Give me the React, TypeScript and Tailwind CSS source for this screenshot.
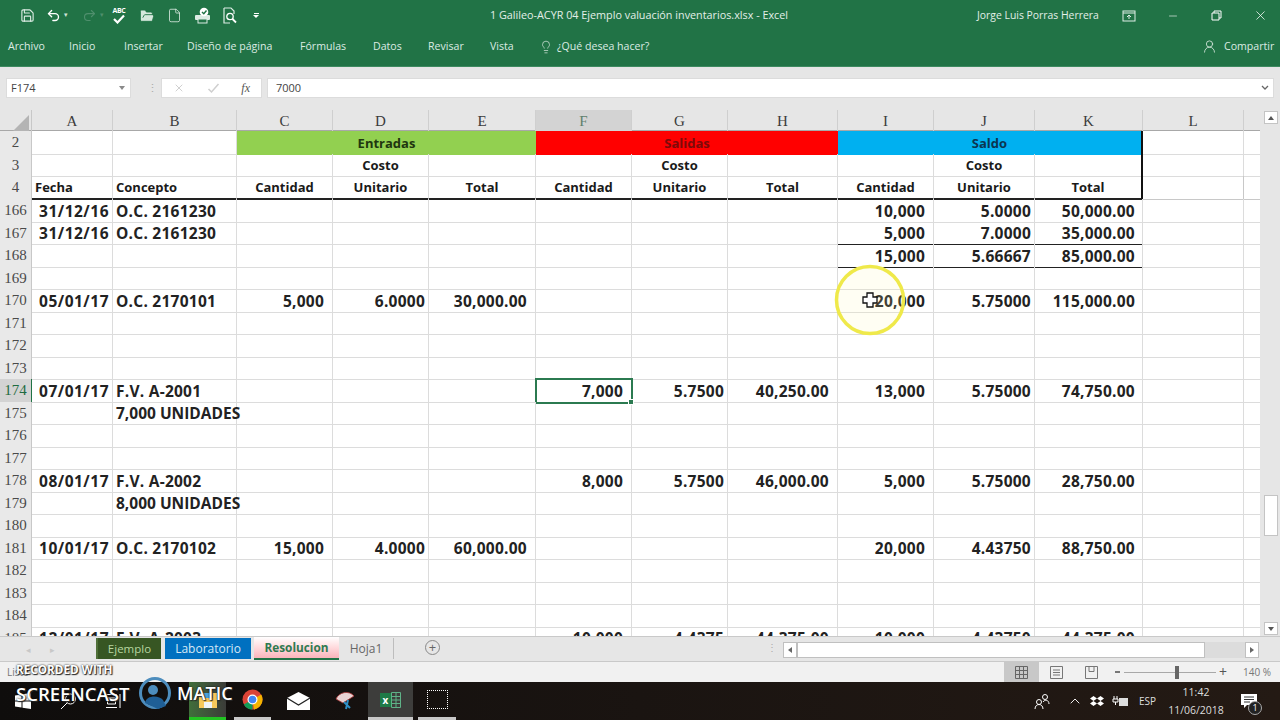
import { ChevronUp, File, FolderOpen, Lightbulb, Minus, Redo2, Save, Undo2, UserRound, X } from "lucide-react";

const colNames = ["A", "B", "C", "D", "E", "F", "G", "H", "I", "J", "K", "L"];
const gridCols = "grid grid-cols-[32px_81px_124px_96px_96px_107px_96px_96px_110px_96px_101px_108px_101px_16px]";

const numPad: Record<string, string> = {
  A: "pr-[3px] justify-end tracking-[0.5px]",
  B: "pl-[3px] justify-start",
  C: "pr-[8px] justify-end",
  D: "pr-[3px] justify-end",
  E: "pr-[8px] justify-end",
  F: "pr-[8px] justify-end",
  G: "pr-[3px] justify-end",
  H: "pr-[8px] justify-end",
  I: "pr-[8px] justify-end",
  J: "pr-[3px] justify-end",
  K: "pr-[7px] justify-end",
  L: "",
};

const rows: { n: number; cells?: Record<string, string>; line?: boolean }[] = [
  { n: 166, cells: { A: "31/12/16", B: "O.C. 2161230", I: "10,000", J: "5.0000", K: "50,000.00" } },
  { n: 167, cells: { A: "31/12/16", B: "O.C. 2161230", I: "5,000", J: "7.0000", K: "35,000.00" }, line: true },
  { n: 168, cells: { I: "15,000", J: "5.66667", K: "85,000.00" }, line: true },
  { n: 169 },
  { n: 170, cells: { A: "05/01/17", B: "O.C. 2170101", C: "5,000", D: "6.0000", E: "30,000.00", I: "20,000", J: "5.75000", K: "115,000.00" } },
  { n: 171 },
  { n: 172 },
  { n: 173 },
  { n: 174, cells: { A: "07/01/17", B: "F.V. A-2001", F: "7,000", G: "5.7500", H: "40,250.00", I: "13,000", J: "5.75000", K: "74,750.00" } },
  { n: 175, cells: { B: "7,000 UNIDADES" } },
  { n: 176 },
  { n: 177 },
  { n: 178, cells: { A: "08/01/17", B: "F.V. A-2002", F: "8,000", G: "5.7500", H: "46,000.00", I: "5,000", J: "5.75000", K: "28,750.00" } },
  { n: 179, cells: { B: "8,000 UNIDADES" } },
  { n: 180 },
  { n: 181, cells: { A: "10/01/17", B: "O.C. 2170102", C: "15,000", D: "4.0000", E: "60,000.00", I: "20,000", J: "4.43750", K: "88,750.00" } },
  { n: 182 },
  { n: 183 },
  { n: 184 },
  { n: 185, cells: { A: "12/01/17", B: "F.V. A-2003", F: "10,000", G: "4.4375", H: "44,375.00", I: "10,000", J: "4.43750", K: "44,375.00" } },
];

const headLabels: Record<string, string> = {
  A: "Fecha",
  B: "Concepto",
  C: "Cantidad",
  D: "Unitario",
  E: "Total",
  F: "Cantidad",
  G: "Unitario",
  H: "Total",
  I: "Cantidad",
  J: "Unitario",
  K: "Total",
};

function RowNum({ n, active }: { n: number; active?: boolean }) {
  return (
    <div
      className={`flex items-center justify-center border-r border-b font-['Liberation_Serif',serif] text-[15px] ${
        active
          ? "bg-[#d3d3d3] text-[#1f6b41] border-r-[#217346] border-b-[#c0c0c0]"
          : "bg-[#e9e9e9] text-[#4a4a4a] border-[#c8c8c8]"
      }`}
    >
      {n}
    </div>
  );
}

function SheetHeader() {
  return (
    <>
      <div className={`${gridCols} h-[21px] bg-[#e6e6e6] border-b border-[#a8a8a8] font-['Liberation_Serif',serif] text-[15px] text-[#3c3c3c]`}>
        <div className="relative border-r border-[#c8c8c8]">
          <div className="absolute right-[2px] bottom-[2px] w-0 h-0 border-l-[16px] border-l-transparent border-b-[16px] border-b-[#b4b4b4]" />
        </div>
        {colNames.map((c) => (
          <div
            key={c}
            className={`flex items-center justify-center border-r border-[#cfcfcf] ${c === "F" ? "bg-[#d3d3d3] text-[#5f7f6c]" : ""}`}
          >
            {c}
          </div>
        ))}
        <div />
      </div>
      <div className={`${gridCols} h-[22.5px]`}>
        <RowNum n={2} />
        <div className="border-r border-b border-[#dcdcdc]" />
        <div className="border-r border-b border-[#dcdcdc]" />
        <div className="col-span-3 flex items-center justify-center bg-[#92d050] pt-[1px] text-[13px] font-bold text-[#20360f]">Entradas</div>
        <div className="col-span-3 flex items-center justify-center bg-[#ff0000] pt-[1px] text-[13px] font-bold text-[#7c0a0a]">Salidas</div>
        <div className="col-span-3 flex items-center justify-center bg-[#00b0f0] pt-[1px] text-[13px] font-bold text-[#0b3550] border-r-2 border-r-[#111]">Saldo</div>
        <div className="border-r border-b border-[#dcdcdc]" />
        <div className="border-b border-[#dcdcdc]" />
      </div>
      <div className={`${gridCols} h-[22.5px]`}>
        <RowNum n={3} />
        {colNames.map((c) => (
          <div
            key={c}
            className={`flex items-center justify-center border-b border-b-[#dcdcdc] pt-[1px] text-[13px] font-bold text-[#1a1a1a] ${
              c === "K" ? "border-r-2 border-r-[#111]" : "border-r border-r-[#dcdcdc]"
            }`}
          >
            {c === "D" || c === "G" || c === "J" ? "Costo" : ""}
          </div>
        ))}
        <div className="border-b border-[#dcdcdc]" />
      </div>
      <div className={`${gridCols} h-[23px]`}>
        <RowNum n={4} />
        {colNames.map((c) => {
          if (c === "L") return <div key={c} className="border-r border-b border-[#c8c8c8]" />;
          return (
            <div
              key={c}
              className={`flex items-center whitespace-nowrap border-b-2 border-b-[#222] pt-[2px] text-[13px] font-bold text-[#1a1a1a] ${
                c === "A" || c === "B" ? "pl-[3px]" : "justify-center"
              } ${c === "K" ? "border-r-2 border-r-[#111]" : "border-r border-r-[#dcdcdc]"}`}
            >
              {headLabels[c]}
            </div>
          );
        })}
        <div className="border-b border-[#c8c8c8]" />
      </div>
    </>
  );
}

function DataRow({ n, cells, line }: { n: number; cells?: Record<string, string>; line?: boolean }) {
  const active = n === 174;
  return (
    <div className={`${gridCols} h-[22.5px]`}>
      <RowNum n={n} active={active} />
      {colNames.map((c) => {
        const selected = active && c === "F";
        const ruled = line && (c === "I" || c === "J" || c === "K");
        const caps = c === "B" && cells?.B?.includes("UNIDADES");
        return (
          <div
            key={c}
            className={`relative flex items-center whitespace-nowrap pt-[2px] text-[15.5px] leading-none font-bold text-[#222] ${numPad[c]} ${
              caps || c === "A" ? "" : "tracking-[0.25px]"
            } ${ruled ? "border-b border-b-[#222]" : "border-b border-b-[#dcdcdc]"} border-r border-r-[#dcdcdc] ${
              selected ? "outline-2 -outline-offset-1 outline-[#2b7a50]" : ""
            }`}
          >
            {c === "B" ? <span className="relative z-10">{cells?.[c]}</span> : cells?.[c]}
            {selected && (
              <div className="absolute -right-[3px] -bottom-[3px] z-10 h-[6px] w-[6px] border border-white bg-[#2b7a50]" />
            )}
          </div>
        );
      })}
      <div className="border-b border-[#dcdcdc]" />
    </div>
  );
}

function Spell() {
  return (
    <div className="flex w-[16px] flex-col items-center leading-none text-white">
      <span className="text-[7px] font-bold tracking-tighter">ABC</span>
      <svg width="14" height="10" viewBox="0 0 14 10">
        <path d="M2 5l3.500 3.500L12 1.500" fill="none" stroke="white" strokeWidth="2.2" />
      </svg>
    </div>
  );
}

function TitleBar() {
  return (
    <div className="flex h-[31px] items-center bg-[#217346] text-white">
      <div className="flex w-[40px] justify-end pr-[5px]">
        <Save size={15} strokeWidth={1.8} className="text-[#dcebe3]" />
      </div>
      <div className="flex w-[21px] justify-end">
        <Undo2 size={15} strokeWidth={2.2} />
      </div>
      <span className="ml-[3px] w-[18px] text-[7px] text-[#cfe2d7]">▾</span>
      <Redo2 size={15} strokeWidth={1.8} className="text-[#4f8f6d]" />
      <span className="ml-[3px] w-[11px] text-[7px] text-[#4f8f6d]">▾</span>
      <Spell />
      <FolderOpen size={16} fill="#d6e8dd" strokeWidth={1.4} className="ml-[12px] text-[#217346]" />
      <File size={15} strokeWidth={1.3} className="ml-[12px] text-[#dcebe3]" />
      <svg width="17" height="17" viewBox="0 0 17 17" className="ml-[12px]">
        <rect x="1" y="8" width="15" height="5" rx="1" fill="#dcebe3" />
        <rect x="4" y="12" width="9" height="4" fill="#217346" stroke="#dcebe3" />
        <circle cx="10" cy="5" r="4.300" fill="white" />
        <path d="M8 5l1.800 1.800L12.500 3.500" stroke="#217346" strokeWidth="1.4" fill="none" />
      </svg>
      <svg width="16" height="17" viewBox="0 0 16 17" className="ml-[11px]">
        <path d="M2 1h7l3 3v3M2 1v15h6" fill="none" stroke="#dcebe3" strokeWidth="1.2" />
        <circle cx="8" cy="9.500" r="3.200" fill="none" stroke="white" strokeWidth="1.3" />
        <path d="M10.500 12l3.500 3.500" stroke="white" strokeWidth="1.8" />
      </svg>
      <div className="ml-[15px] flex w-[6px] flex-col items-center gap-[1px]">
        <div className="h-px w-[5px] bg-white" />
        <div className="h-0 w-0 border-x-[3px] border-t-[3px] border-x-transparent border-t-white" />
      </div>
      <span className="ml-[231px] w-[300px] whitespace-nowrap text-[10.8px] text-[#e3efe8]">
        1 Galileo-ACYR 04 Ejemplo valuación inventarios.xlsx  -  Excel
      </span>
      <span className="ml-[187px] w-[122px] whitespace-nowrap text-[10.4px] text-[#e3efe8]">Jorge Luis Porras Herrera</span>
      <svg width="14" height="12" viewBox="0 0 14 12" className="ml-[23px]">
        <rect x="1" y="1" width="12" height="10" fill="none" stroke="#dfeee6" />
        <path d="M1 3h12M7 9V5M5 7l2-2 2 2" fill="none" stroke="#dfeee6" />
      </svg>
      <Minus size={12} strokeWidth={1.2} className="ml-[31px]" />
      <svg width="11" height="11" viewBox="0 0 11 11" className="ml-[32px]">
        <path d="M3 3V1h7v7H8M1 3h7v7H1z" fill="none" stroke="white" />
      </svg>
      <X size={15} strokeWidth={1.2} className="ml-[31px]" />
    </div>
  );
}

function RibbonTabs() {
  const tabs = [
    ["Archivo", "ml-[8px] w-[39px]"],
    ["Inicio", "ml-[22px] w-[28px]"],
    ["Insertar", "ml-[27px] w-[36px]"],
    ["Diseño de página", "ml-[27px] w-[86px]"],
    ["Fórmulas", "ml-[27px] w-[46px]"],
    ["Datos", "ml-[27px] w-[28px]"],
    ["Revisar", "ml-[27px] w-[35px]"],
    ["Vista", "ml-[27px] w-[24px]"],
  ];
  return (
    <div className="flex h-[36px] items-center border-b border-[#3d8a60] bg-[#217346] pb-[4px] text-[10.6px] text-[#dcebe3]">
      {tabs.map(([label, cls]) => (
        <span key={label} className={`${cls} whitespace-nowrap`}>
          {label}
        </span>
      ))}
      <Lightbulb size={14} strokeWidth={1.2} className="ml-[25px]" />
      <span className="ml-[4px] w-[90px] whitespace-nowrap">¿Qué desea hacer?</span>
      <UserRound size={15} strokeWidth={1.3} className="ml-[555px]" />
      <span className="ml-[7px] whitespace-nowrap">Compartir</span>
    </div>
  );
}

function FormulaBar() {
  return (
    <div className="flex h-[43px] items-start bg-[#e6e6e6] pt-[11px] pl-[6px] pr-[6px] text-[11px] text-[#444]">
      <div className="flex h-[20px] w-[125px] items-center justify-between border border-[#dcdcdc] bg-white pl-[4px] pr-[5px]">
        <span>F174</span>
        <span className="h-0 w-0 border-x-[3px] border-t-[4px] border-x-transparent border-t-[#8a8a8a]" />
      </div>
      <div className="ml-[13px] flex h-[20px] w-[17px] items-center justify-center text-[#aaa]">⋮</div>
      <div className="flex h-[20px] w-[101px] items-center justify-between border border-[#dcdcdc] bg-white px-[11px]">
        <X size={12} className="text-[#d0d0d0]" />
        <svg width="13" height="11" viewBox="0 0 13 11">
          <path d="M1.500 6l3 3 7-8" fill="none" stroke="#cfcfcf" strokeWidth="1.500" />
        </svg>
        <span className="font-['Liberation_Serif',serif] text-[12px] italic text-[#555]">fx</span>
      </div>
      <div className="ml-[5px] flex h-[20px] flex-1 items-center justify-between border border-[#dcdcdc] bg-white pl-[8px] pr-[4px]">
        <span>7000</span>
        <svg width="8" height="6" viewBox="0 0 8 6">
          <path d="M1 1l3 3 3-3" fill="none" stroke="#666" strokeWidth="1.300" />
        </svg>
      </div>
    </div>
  );
}

function VScroll() {
  return (
    <div className="flex w-[20px] flex-col items-center bg-[#e6e6e6] pt-[1px] pb-[1px] pl-[1px]">
      <div className="flex h-[13px] w-[14px] items-center justify-center border border-[#c4c4c4] bg-white">
        <div className="h-0 w-0 border-x-[3px] border-b-[4px] border-x-transparent border-b-[#555]" />
      </div>
      <div className="mt-[371px] h-[41px] w-[14px] border border-[#c4c4c4] bg-white" />
      <div className="flex-1" />
      <div className="flex h-[13px] w-[14px] items-center justify-center border border-[#c4c4c4] bg-white">
        <div className="h-0 w-0 border-x-[3px] border-t-[4px] border-x-transparent border-t-[#555]" />
      </div>
    </div>
  );
}

function Sheet() {
  return (
    <div className="relative flex h-[526px] overflow-hidden bg-white">
      <div className="flex-1 overflow-hidden">
        <SheetHeader />
        {rows.map((r) => (
          <DataRow key={r.n} n={r.n} cells={r.cells} line={r.line} />
        ))}
      </div>
      <VScroll />
      <svg width="76" height="76" viewBox="0 0 76 76" className="absolute left-[832px] top-[152px] z-20">
        <circle cx="38" cy="38" r="33.500" fill="#fff9a8" fillOpacity="0.14" stroke="#efe94a" strokeWidth="3.500" />
        <path d="M35 31h6v4h4v6h-4v4h-6v-4h-4v-6h4z" fill="white" stroke="#111" strokeWidth="1.300" />
      </svg>
    </div>
  );
}

function SheetTabs() {
  return (
    <div className="flex h-[26px] items-start border-y border-[#c9c9c9] bg-[#e6e6e6] text-[12px]">
      <div className="flex w-[96px] items-center gap-[19px] pl-[26px] pt-[6px] text-[9px] text-[#c8c8c8]">
        <span>◂</span>
        <span>▸</span>
      </div>
      <div className="mt-[1px] flex h-[21px] w-[65px] items-center justify-center border-l-2 border-[#4f6f38] bg-[#375623] text-[11.5px] text-[#b7d6a0]">Ejemplo</div>
      <div className="ml-[4px] mt-[1px] flex h-[21px] w-[86px] items-center justify-center bg-[#0070c0] text-[#d5e8f6]">Laboratorio</div>
      <div className="ml-[3px] flex h-[23px] w-[85px] items-center justify-center border-b-2 border-[#217346] bg-gradient-to-b from-white to-[#fbb4bb] text-[11.8px] font-bold text-[#2f7a50]">Resolucion</div>
      <div className="mt-[1px] flex h-[21px] w-[55px] items-center justify-center border-r border-[#bdbdbd] text-[#666]">Hoja1</div>
      <div className="ml-[31px] mt-[3px] flex h-[15px] w-[15px] items-center justify-center rounded-full border border-[#888] text-[13px] leading-none text-[#666]">+</div>
      <div className="ml-[327px] mt-[5px] w-[4px] text-[10px] leading-none text-[#aaa]">⋮</div>
      <div className="ml-[12px] mt-[5px] flex h-[16px] w-[14px] items-center justify-center border border-[#c0c0c0] bg-white">
        <div className="h-0 w-0 border-y-[3px] border-r-[4px] border-y-transparent border-r-[#666]" />
      </div>
      <div className="mt-[5px] h-[16px] w-[408px] border border-[#c0c0c0] bg-white" />
      <div className="mt-[5px] h-[16px] w-[40px] bg-[#dcdcdc]" />
      <div className="mt-[5px] flex h-[16px] w-[14px] items-center justify-center border border-[#c0c0c0] bg-white">
        <div className="h-0 w-0 border-y-[3px] border-l-[4px] border-y-transparent border-l-[#666]" />
      </div>
    </div>
  );
}

function StatusBar() {
  return (
    <div className="flex h-[20px] items-center bg-[#f1f1f1] text-[10px] text-[#777]">
      <span className="ml-[7px] w-[997px]">Listo</span>
      <div className="flex h-full w-[35px] items-center justify-center bg-[#c8c8c8]">
        <svg width="13" height="13" viewBox="0 0 13 13">
          <path d="M.5.5h12v12H.5zM4.500.5v12M8.500.5v12M.5 4.500h12M.5 8.500h12" fill="none" stroke="#666" />
        </svg>
      </div>
      <svg width="13" height="13" viewBox="0 0 13 13" className="ml-[11px]">
        <path d="M.5.5h12v12H.5zM3 4h7M3 6.500h7M3 9h7" fill="none" stroke="#777" />
      </svg>
      <svg width="13" height="13" viewBox="0 0 13 13" className="ml-[22px]">
        <path d="M.5.5h12v12H.5zM4 .5v5h5v-5" fill="none" stroke="#777" />
      </svg>
      <span className="ml-[17px] h-[2px] w-[5px] bg-[#777]" />
      <div className="relative ml-[4px] h-px w-[92px] bg-[#a8a8a8]">
        <div className="absolute left-[51px] -top-[6px] h-[13px] w-[4px] bg-[#666]" />
      </div>
      <span className="ml-[3px] text-[14px] leading-none text-[#555]">+</span>
      <span className="ml-[16px] whitespace-nowrap text-[#777]">140 %</span>
    </div>
  );
}

function Taskbar() {
  return (
    <div className="relative flex h-[38px] items-center bg-gradient-to-r from-[#0f0d0c] via-[#1a1411] to-[#241a14] text-white">
      <svg width="16" height="16" viewBox="0 0 16 16" className="ml-[15px]">
        <path d="M0 2.500l6.500-1v6H0zM7.500 1.300L16 0v7.500H7.500zM0 8.500h6.500v6l-6.500-1zM7.500 8.500H16V16l-8.500-1.300z" fill="white" />
      </svg>
      <svg width="17" height="17" viewBox="0 0 17 17" className="ml-[29px]">
        <circle cx="10.500" cy="6" r="5" fill="none" stroke="white" />
        <path d="M7 10l-6 6" stroke="white" />
      </svg>
      <svg width="16" height="14" viewBox="0 0 16 14" className="ml-[28px]">
        <path d="M1 .5h11M1 13.500h11M2.500 4h8v6h-8zM15 0v14" fill="none" stroke="white" />
      </svg>
      <div className="ml-[68px] flex h-full w-[37px] items-center justify-center border-b-[3px] border-[#22c322] bg-gradient-to-r from-[#3f6e3a] to-[#3b3b38]">
        <svg width="20" height="18" viewBox="0 0 20 18">
          <path d="M1 2h18v15H1z" fill="#f6c95b" />
          <path d="M5 2h10v5H5z" fill="#4aa3df" />
          <path d="M6 11h8v6H6z" fill="#eef4f8" />
        </svg>
      </div>
      <div className="ml-[8px] flex h-full w-[37px] items-center justify-center border-b-[3px] border-[#c8c8c8]">
        <svg width="21" height="21" viewBox="0 0 21 21">
          <circle cx="10.500" cy="10.500" r="10" fill="#db4437" />
          <path d="M10.500 10.500L1.800 15.500A10 10 0 0 0 10.500 20.500z" fill="#0f9d58" />
          <path d="M10.500 10.500L19.200 5.500A10 10 0 0 1 12 20.400z" fill="#f4b400" />
          <circle cx="10.500" cy="10.500" r="5" fill="white" />
          <circle cx="10.500" cy="10.500" r="3.800" fill="#4285f4" />
        </svg>
      </div>
      <div className="ml-[9px] flex h-full w-[37px] items-center justify-center">
        <svg width="23" height="18" viewBox="0 0 23 18">
          <path d="M0 6L11.500 0 23 6v12H0z" fill="white" />
          <path d="M0 6l11.500 7L23 6" fill="none" stroke="#222" strokeWidth="1.200" />
        </svg>
      </div>
      <div className="ml-[9px] flex h-full w-[37px] items-center justify-center">
        <svg width="22" height="22" viewBox="0 0 22 22">
          <path d="M2 9C5 2 15 0 20 6L9 13z" fill="#e9d3d3" stroke="#a33" strokeWidth="0.800" />
          <path d="M10 12l6 6M14 10l-2 9" stroke="#2d8fc7" strokeWidth="2" />
        </svg>
      </div>
      <div className="ml-[5px] flex h-full w-[45px] items-center justify-center border-b-[3px] border-[#c8c8c8] bg-[#3d3d3b]">
        <div className="flex h-[14px] w-[11px] items-center justify-center bg-[#1e7a47] text-[10px] leading-none font-bold">x</div>
        <svg width="10" height="16" viewBox="0 0 10 16">
          <path d="M.5.5h9v15h-9zM.5 4.500h9M.5 8h9M.5 11.500h9M5 .5v15" fill="none" stroke="#5fb287" />
        </svg>
      </div>
      <div className="ml-[5px] flex h-full w-[38px] items-center justify-center border-b-[3px] border-[#c8c8c8]">
        <div className="h-[19px] w-[21px] border border-dotted border-white" />
      </div>
      <div className="ml-[578px]">
        <svg width="16" height="17" viewBox="0 0 16 17">
          <circle cx="5" cy="9" r="2.500" fill="none" stroke="white" />
          <path d="M1 16c0-6 8-6 8 0" fill="none" stroke="white" />
          <circle cx="11" cy="4" r="2.500" fill="none" stroke="white" />
          <path d="M9 9c2-3 6-2 6 2" fill="none" stroke="white" />
        </svg>
      </div>
      <ChevronUp size={16} strokeWidth={1.400} className="ml-[17px]" />
      <svg width="14" height="13" viewBox="0 0 14 13" className="ml-[7px]">
        <path d="M3.500 1L7 3.500 3.500 6 0 3.500zM10.500 1L14 3.500 10.500 6 7 3.500zM3.500 6L7 8.500 3.500 11 0 8.500zM10.500 6L14 8.500 10.500 11 7 8.500z" fill="white" />
      </svg>
      <svg width="17" height="13" viewBox="0 0 17 13" className="ml-[8px]">
        <path d="M2 1v3M5 1v3M1 4h5v3H1zM3.500 7v3" fill="none" stroke="white" />
        <rect x="7" y="3" width="9" height="8" fill="#ddd" />
      </svg>
      <span className="ml-[10px] w-[18px] whitespace-nowrap text-[10px] text-[#ddd]">ESP</span>
      <div className="ml-[11px] flex w-[56px] flex-col items-center text-[10.5px] leading-[18px] text-[#ddd]">
        <span>11:42</span>
        <span className="whitespace-nowrap">11/06/2018</span>
      </div>
      <div className="relative ml-[17px]">
        <svg width="16" height="15" viewBox="0 0 16 15">
          <path d="M0 0h16v11H6l-3 3v-3H0z" fill="white" />
          <path d="M3 3h10M3 5.500h10M3 8h6" stroke="#333" />
        </svg>
        <div className="absolute -right-[5px] top-[7px] flex h-[14px] w-[14px] items-center justify-center rounded-full border border-[#aaa] bg-[#222] text-[9px]">1</div>
      </div>
    </div>
  );
}

function RecordedOverlay() {
  return (
    <div className="pointer-events-none absolute left-[16px] top-[662px] z-30 text-white [text-shadow:0_0_2px_#000,1px_1px_1px_#333]">
      <div className="text-[11.700px] leading-[14px] font-bold whitespace-nowrap">RECORDED WITH</div>
      <div className="-mt-[1px] flex items-center">
        <span className="w-[118px] text-[18.500px] font-semibold whitespace-nowrap">SCREENCAST</span>
        <svg width="34" height="36" viewBox="0 0 34 36" className="mt-[1px] ml-[4px]">
          <circle cx="17" cy="17" r="14.500" fill="none" stroke="#4d8dbd" strokeWidth="3" />
          <circle cx="15" cy="14" r="5" fill="#4d8dbd" />
          <path d="M7 27c1-8 14-8 18-3l3 6-8 3z" fill="#1f5f96" />
        </svg>
        <span className="ml-[5px] text-[18px] font-semibold whitespace-nowrap">MATIC</span>
      </div>
    </div>
  );
}

export default function App() {
  return (
    <div className="relative flex h-[720px] w-[1280px] flex-col overflow-hidden bg-[#e6e6e6] font-['Open_Sans',sans-serif]">
      <TitleBar />
      <RibbonTabs />
      <FormulaBar />
      <Sheet />
      <SheetTabs />
      <StatusBar />
      <Taskbar />
      <RecordedOverlay />
    </div>
  );
}
